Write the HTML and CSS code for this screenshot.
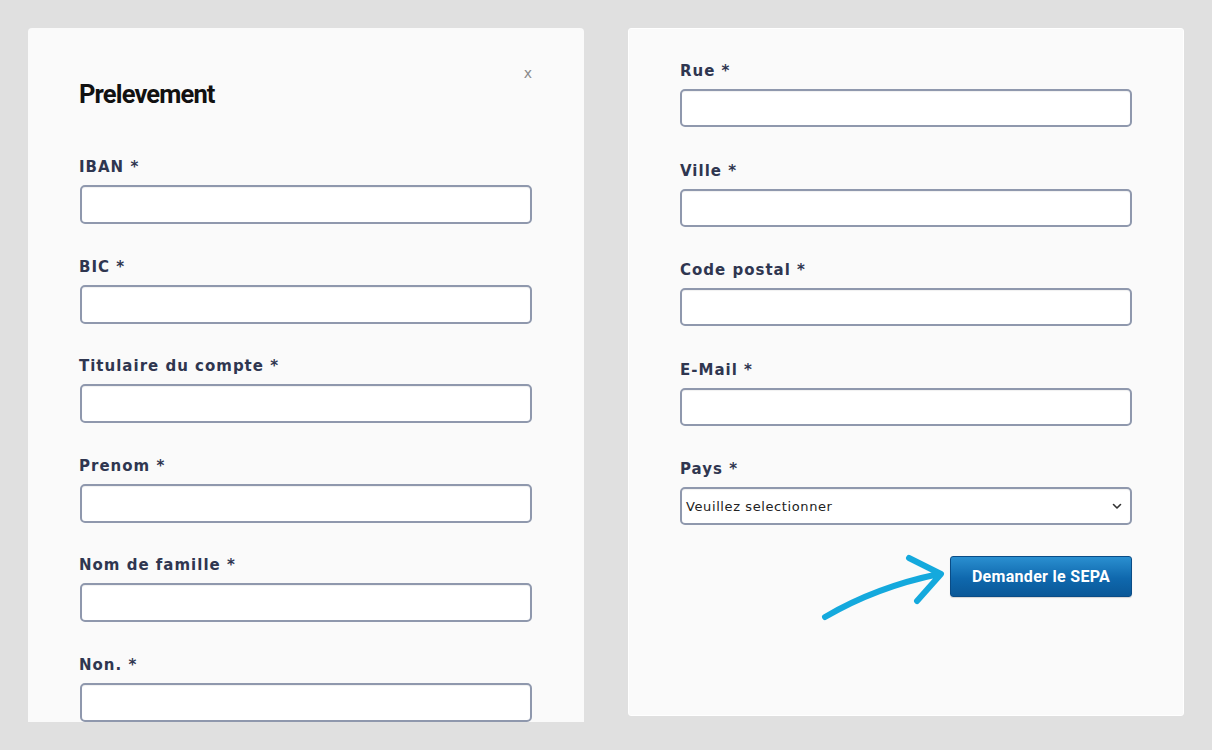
FILE: index.html
```html
<!DOCTYPE html>
<html lang="fr">
<head>
<meta charset="utf-8">
<title>Prelevement</title>
<link rel="stylesheet" href="styles.css">
</head>
<body>
<div class="page">
  <section class="panel panel-left">
    <span class="close">x</span>
    <h1 class="title">Prelevement</h1>
    <div class="field">
      <label class="label">IBAN *</label>
      <div class="input"></div>
    </div>
    <div class="field">
      <label class="label">BIC *</label>
      <div class="input"></div>
    </div>
    <div class="field">
      <label class="label">Titulaire du compte *</label>
      <div class="input"></div>
    </div>
    <div class="field">
      <label class="label">Prenom *</label>
      <div class="input"></div>
    </div>
    <div class="field">
      <label class="label">Nom de famille *</label>
      <div class="input"></div>
    </div>
    <div class="field">
      <label class="label">Non. *</label>
      <div class="input"></div>
    </div>
  </section>
  <section class="panel panel-right">
    <div class="field">
      <label class="label">Rue *</label>
      <div class="input"></div>
    </div>
    <div class="field">
      <label class="label">Ville *</label>
      <div class="input"></div>
    </div>
    <div class="field">
      <label class="label">Code postal *</label>
      <div class="input"></div>
    </div>
    <div class="field">
      <label class="label">E-Mail *</label>
      <div class="input"></div>
    </div>
    <div class="field">
      <label class="label">Pays *</label>
      <div class="input select">
        <span class="select-text">Veuillez selectionner</span>
        <svg class="chevron" width="10" height="7" viewBox="0 0 10 7"><path d="M1.5 1.5 L5 5 L8.5 1.5" fill="none" stroke="#333" stroke-width="1.6" stroke-linecap="round" stroke-linejoin="round"/></svg>
      </div>
    </div>
    <div class="actions">
      <svg class="arrow" width="130" height="72" viewBox="0 0 130 72"><path d="M4 66 Q55 36 118 23 M88 7 L120 23 L96 50" fill="none" stroke="#14a9dd" stroke-width="6" stroke-linecap="round" stroke-linejoin="round"/></svg>
      <button class="btn">Demander le SEPA</button>
    </div>
  </section>
</div>
</body>
</html>
```

FILE: styles.css
```css
html, body {
  margin: 0;
  padding: 0;
}
body {
  background: #e0e0e0;
  font-family: "DejaVu Sans", Verdana, sans-serif;
  width: 1212px;
  height: 750px;
  overflow: hidden;
}
.page {
  display: flex;
  align-items: flex-start;
  gap: 44px;
  padding: 28px 0 0 28px;
}
.panel {
  background: #fafafa;
  width: 556px;
  box-sizing: border-box;
  position: relative;
}
.panel-left {
  height: 694px;
  overflow: hidden;
  padding: 51px 52px 0 52px;
  border-radius: 4px 4px 0 0;
}
.panel-right {
  height: 688px;
  padding: 32px 51px 0 51px;
  border: 1px solid #ffffff;
  border-radius: 3px;
}
.close {
  position: absolute;
  top: 37px;
  right: 52px;
  font-family: "DejaVu Sans", sans-serif;
  font-size: 14px;
  color: #8a8a8a;
}
.title {
  margin: 0 0 48px -1px;
  font-family: Roboto, "Liberation Sans", sans-serif;
  font-weight: 700;
  font-size: 25.5px;
  line-height: 30px;
  letter-spacing: -0.85px;
  color: #111;
}
.field {
  display: flex;
  flex-direction: column;
  gap: 8px;
  margin-bottom: 32.6px;
}
.panel-right .field {
  margin-bottom: 33.5px;
}
.label {
  font-family: "DejaVu Sans", Verdana, sans-serif;
  font-weight: bold;
  font-size: 15px;
  line-height: 20px;
  letter-spacing: 1px;
  color: #2f3650;
  margin-left: -1px;
}
.panel-right .label {
  margin-left: 0;
}
.input {
  height: 39px;
  box-sizing: border-box;
  border: 2px solid #8f98ad;
  border-radius: 5px;
  background: #fff;
  box-shadow: inset 0 1px 1px rgba(0,0,0,0.06);
}
.panel-right .input {
  height: 38px;
}
.select {
  display: flex;
  align-items: center;
  justify-content: space-between;
  padding: 0 8px 0 4px;
}
.select-text {
  font-family: "DejaVu Sans", Verdana, sans-serif;
  font-size: 13px;
  letter-spacing: 0.6px;
  color: #222;
}
.chevron {
  display: block;
}
.actions {
  position: relative;
  display: flex;
  justify-content: flex-end;
  margin-top: -2.5px;
}
.arrow {
  position: absolute;
  left: 141px;
  top: -5px;
}
.btn {
  width: 182px;
  height: 41px;
  border: 1px solid #0a4c86;
  border-radius: 3px;
  background: linear-gradient(to bottom, #2a8fd0 0%, #0f68ad 55%, #0a5898 100%);
  color: #fff;
  font-family: Roboto, "Liberation Sans", sans-serif;
  font-weight: 700;
  font-size: 16px;
  letter-spacing: 0.3px;
  padding: 0;
  box-shadow: 0 1px 1px rgba(0,0,0,0.15);
}
```
